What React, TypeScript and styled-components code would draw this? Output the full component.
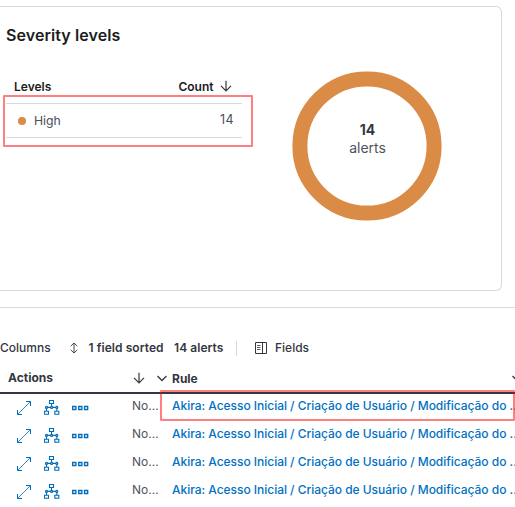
import React from 'react';
import styled, { createGlobalStyle } from 'styled-components';

const GlobalStyle = createGlobalStyle`
  * { box-sizing: border-box; }
  body { margin: 0; background: #fff; overflow: hidden; font-family: Inter, sans-serif; color: #343741; }
`;

const Page = styled.main`
  width: 515px;
  height: 507px;
  padding-top: 6px;
  overflow: hidden;
`;

const Panel = styled.section`
  display: flex;
  width: 502px;
  height: 285px;
  border: 1px solid #d3dae6;
  border-left: 0;
  border-radius: 0 6px 6px 0;
`;

const Levels = styled.div`
  position: relative;
  width: 242px;
  padding: 18px 0 0 6px;
`;

const Title = styled.h2`
  margin: 0;
  font-size: 16px;
  line-height: 20px;
  font-weight: 600;
  letter-spacing: 0.08px;
  color: #1a1c21;
  white-space: nowrap;
`;

const LevelsHeader = styled.div`
  display: flex;
  align-items: center;
  height: 24px;
  margin-top: 29px;
  padding: 0 10.5px 0 8px;
  font-size: 12px;
  font-weight: 600;
  color: #1a1c21;
  svg { margin-left: 6px; }
`;

const CountLabel = styled.span`
  margin-left: auto;
`;

const LevelsRow = styled.div`
  display: flex;
  align-items: center;
  height: 35px;
  margin-top: 5px;
  padding: 0 8px 0 12px;
  border-top: 1px solid #d3dae6;
  border-bottom: 1px solid #d3dae6;
  font-size: 12.25px;
  color: #4a4d57;
`;

const Dot = styled.span`
  width: 8px;
  height: 8px;
  margin-right: 8px;
  border-radius: 50%;
  background: #da8b45;
`;

const LevelCount = styled.span`
  margin-left: auto;
  font-size: 12.5px;
  line-height: 16px;
  letter-spacing: 0.4px;
  padding-bottom: 1px;
`;

const Highlight = styled.div<{ $x: number; $y: number; $w: number; $h: number }>`
  position: absolute;
  left: ${(p) => p.$x}px;
  top: ${(p) => p.$y}px;
  width: ${(p) => p.$w}px;
  height: ${(p) => p.$h}px;
  border: 2px solid rgba(255, 0, 0, 0.5);
  border-radius: 1px;
  pointer-events: none;
`;

const ChartArea = styled.div`
  flex: 1;
  padding: 64px 0 0 50px;
`;

const Donut = styled.div`
  display: grid;
  width: 150px;
  height: 150px;
  > * { grid-area: 1 / 1; }
`;

const DonutLabel = styled.div`
  display: flex;
  flex-direction: column;
  align-items: center;
  padding: 50px 0 0 1px;
  font-size: 14px;
  line-height: 18px;
`;

const DonutUnit = styled.span`
  color: #50535e;
`;

const Divider = styled.div`
  height: 1px;
  margin-top: 16px;
  background: #d3dae6;
`;

const Toolbar = styled.div`
  display: flex;
  align-items: center;
  height: 32px;
  margin-top: 24px;
  font-size: 12px;
  line-height: 16px;
  white-space: nowrap;
`;

const ToolLabel = styled.span<{ $width?: number; $strong?: boolean }>`
  width: ${(p) => (p.$width ? `${p.$width}px` : 'auto')};
  flex: none;
  font-weight: ${(p) => (p.$strong ? 600 : 500)};
  letter-spacing: ${(p) => (p.$strong ? '0.06px' : '0')};
  svg { display: block; }
`;

const Separator = styled.span`
  width: 1px;
  height: 15px;
  margin-right: 18px;
  background: #d3dae6;
`;

const Grid = styled.div`
  position: relative;
`;

const columns = '132px 30px 353px';

const GridHeader = styled.div`
  display: grid;
  grid-template-columns: ${columns};
  height: 30px;
  border-bottom: 2px solid #343741;
  font-size: 12px;
  font-weight: 700;
  line-height: 28px;
  svg { display: block; }
`;

const ActionsTitle = styled.span`
  padding-left: 8px;
`;

const SortCell = styled.span`
  padding: 8px 0 0 1.4px;
`;

const RuleTitle = styled.span`
  display: flex;
  position: relative;
  padding-left: 10px;
  line-height: 30px;
`;

const ColumnMenu = styled.span<{ $x: number }>`
  position: absolute;
  left: ${(p) => p.$x}px;
  top: 11px;
`;

const GridRow = styled.div`
  display: grid;
  grid-template-columns: ${columns};
  height: 28px;
  font-size: 12px;
  line-height: 23px;
  white-space: nowrap;
`;

const Actions = styled.div`
  display: flex;
  gap: 12px;
  padding: 6px 0 0 16px;
  color: #006bb8;
`;

const Truncated = styled.span`
  color: #50535e;
`;

const RuleLink = styled.a`
  padding-left: 10px;
  color: #0071c2;
  font-weight: 500;
  letter-spacing: -0.03px;
  text-decoration: none;
`;

const ArrowDown = () => (
  <svg width="12" height="12" viewBox="0 0 12 12" fill="none" stroke="#343741" strokeWidth="1.2">
    <path d="M6 .8v10M1 5.8l5 5 5-5" />
  </svg>
);

const Chevron = () => (
  <svg width="10" height="7" viewBox="0 0 10 7" fill="none" stroke="#343741" strokeWidth="1.3">
    <path d="M.5 1 5 5.5 9.5 1" />
  </svg>
);

const SortIcon = () => (
  <svg width="8" height="12" viewBox="0 0 8 12" fill="none" stroke="#343741" strokeWidth="0.9">
    <path d="M4 1v10M.7 4.2 4 1l3.3 3.2M.7 7.8 4 11l3.3-3.2" />
  </svg>
);

const FieldsIcon = () => (
  <svg width="12" height="12" viewBox="0 0 12 12" fill="none" stroke="#343741" strokeWidth="1">
    <path d="M.5.5h11v11H.5zM7.5.5v11" />
    <path d="M2 3.5h3.5M2 5.5h3.5M2 7.5h3.5" strokeWidth="0.8" />
  </svg>
);

const ExpandIcon = () => (
  <svg width="16" height="16" viewBox="0 0 16 16" fill="none" stroke="currentColor" strokeWidth="1">
    <path d="M10 1.5h4.5V6M1.5 10v4.5H6" />
    <path d="M14 2 2 14" strokeWidth="0.8" />
  </svg>
);

const AnalyzeIcon = () => (
  <svg width="16" height="16" viewBox="0 0 16 16" fill="none" stroke="currentColor" strokeWidth="1.1">
    <path d="M5.5.5h4v3h-4zM7.5 3.5v3M2.5 7.4h10.5M2.5 8v3M12.8 8v3M.5 11.3h4v3h-4zM10.8 11.3h4v3h-4z" />
    <g fill="#fff"><circle cx="2.5" cy="7.4" r="1" /><circle cx="7.6" cy="7.4" r="1" /><circle cx="12.8" cy="7.4" r="1" /></g>
  </svg>
);

const MoreIcon = () => (
  <svg width="17" height="16" viewBox="0 0 17 16" fill="none" stroke="currentColor" strokeWidth="1.3">
    <path d="M.7 6.5h3.2v3H.7zM6.7 6.5h3.2v3H6.7zM12.5 6.5h3.2v3h-3.2z" />
  </svg>
);

const alerts = [1, 2, 3, 4];

export default function App() {
  return (
    <Page>
      <GlobalStyle />
      <Panel>
        <Levels>
          <Title>Severity levels</Title>
          <LevelsHeader>
            Levels<CountLabel>Count</CountLabel><ArrowDown />
          </LevelsHeader>
          <LevelsRow>
            <Dot />High<LevelCount>14</LevelCount>
          </LevelsRow>
          <Highlight $x={3} $y={88} $w={250} $h={52} />
        </Levels>
        <ChartArea>
          <Donut>
            <svg width="150" height="150" viewBox="0 0 150 150" fill="none">
              <circle cx="75" cy="75" r="67.1" stroke="#da8b45" strokeWidth="15" />
            </svg>
            <DonutLabel><strong>14</strong><DonutUnit>alerts</DonutUnit></DonutLabel>
          </Donut>
        </ChartArea>
      </Panel>
      <Divider />
      <Toolbar>
        <ToolLabel $width={69.5}>Columns</ToolLabel>
        <ToolLabel $width={19}><SortIcon /></ToolLabel>
        <ToolLabel $width={85.5} $strong>1 field sorted</ToolLabel>
        <ToolLabel $width={62} $strong>14 alerts</ToolLabel>
        <Separator />
        <ToolLabel $width={20}><FieldsIcon /></ToolLabel>
        <ToolLabel>Fields</ToolLabel>
      </Toolbar>
      <Grid>
        <GridHeader>
          <ActionsTitle>Actions</ActionsTitle>
          <SortCell><ArrowDown /></SortCell>
          <RuleTitle>
            <ColumnMenu $x={-5}><Chevron /></ColumnMenu>
            Rule
            <ColumnMenu $x={350}><Chevron /></ColumnMenu>
          </RuleTitle>
        </GridHeader>
        {alerts.map((id) => (
          <GridRow key={id}>
            <Actions><ExpandIcon /><AnalyzeIcon /><MoreIcon /></Actions>
            <Truncated>No...</Truncated>
            <RuleLink>Akira: Acesso Inicial / Criação de Usuário / Modificação do ...</RuleLink>
          </GridRow>
        ))}
        <Highlight $x={160} $y={26} $w={355} $h={31} />
      </Grid>
    </Page>
  );
}
